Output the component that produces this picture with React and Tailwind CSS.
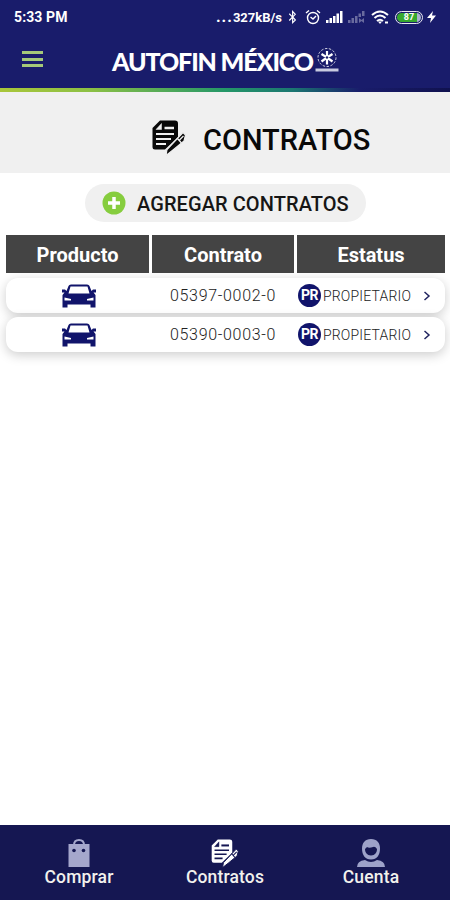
import { FaBluetoothB } from 'react-icons/fa';

const CONTRACTS = [
  { id: '05397-0002-0', badge: 'PR', status: 'PROPIETARIO' },
  { id: '05390-0003-0', badge: 'PR', status: 'PROPIETARIO' },
];

function ContractIcon({ className, lines }) {
  return (
    <svg viewBox="0 0 34 36" className={className} fill="currentColor">
      <path d="M8 0.500H23Q26 0.500 26 3.500V17L13 29.500H3Q0.500 29.500 0.500 27V8Z" />
      <g stroke={lines} fill="none">
        <path d="M4 9.500L9.500 3.500V9.500Z" fill={lines} strokeWidth="0.500" />
        <path d="M12.500 8H22" strokeWidth="2.500" />
        <path d="M4 14H22M4 19H19M4 24H14" strokeWidth="2" />
      </g>
      <path d="M31 12.500L33.500 15L32 21L21 30L14 35.500L15 29.500Z" stroke={lines} strokeWidth="1.200" />
      <path d="M25 18L29.500 23M31.500 16L27.500 20" stroke={lines} strokeWidth="1.300" />
    </svg>
  );
}

function CarIcon() {
  return (
    <svg viewBox="0 0 34 24" className="h-6 w-[34px]" fill="#11146b">
      <path fillRule="evenodd" d="M6.500 2Q7 0.500 9 0.500H25Q27 0.500 27.500 2L29.500 7L31 5.500H34V8.500H31.500L33.500 11V23.500H28.500V20.500H5.500V23.500H0.500V11L2.500 8.500H0V5.500H3L4.500 7ZM8.500 2.500L6.500 9.500H27.500L25.500 2.500ZM2.500 13.500V16.500H9V15ZM31.500 13.500L25 15V16.500H31.500Z" />
    </svg>
  );
}

function StatusBar() {
  return (
    <div className="flex h-[34px] items-center pl-[14px] pr-[14px] text-white">
      <span className="text-[14px] font-bold tracking-[0.100px]">5:33 PM</span>
      <div className="ml-auto flex h-[18px] items-center">
        <span className="mr-[4px] whitespace-nowrap text-[13px] font-bold"><span className="text-[16px] tracking-[1px]">...</span>327kB/s</span>
        <FaBluetoothB className="mr-[6px] h-[14px] w-[13px]" />
        <svg viewBox="0 0 16 16" className="mr-[5px] h-4 w-4" fill="none" stroke="currentColor" strokeWidth="1.400">
          <circle cx="8" cy="9" r="5.500" />
          <path d="M1 4L4 1.500M15 4L12 1.500M5.500 8L8 10L11 7" />
        </svg>
        <svg viewBox="0 0 17 14" className="mr-[5px] h-[14px] w-[17px]" fill="currentColor">
          <path d="M0 10H2.500V13H0ZM3.500 8H6V13H3.500ZM7 6H9.500V13H7ZM10.500 3.500H13V13H10.500ZM14 1H16.500V13H14Z" />
        </svg>
        <svg viewBox="0 0 17 14" className="mr-[6px] h-[14px] w-[17px] opacity-35" fill="currentColor">
          <path d="M0 10H2.500V13H0ZM3.500 8H6V13H3.500ZM7 6H9.500V13H7ZM10.500 3.500H13V7H10.500ZM14 1H16.500V6H14ZM11 8L13.500 10L16 8V13L13.500 11L11 13Z" />
        </svg>
        <svg viewBox="0 0 18 15" className="mr-[6px] h-[15px] w-[18px]" fill="none" stroke="currentColor" strokeWidth="2">
          <path d="M1 5Q9 -2 17 5M3.500 8Q9 3 14.500 8M6 11Q9 8.500 12 11" />
          <path d="M7 11.500L9 14L11 11.500Z" fill="currentColor" stroke="none" />
          <path d="M14 12.500H17" />
        </svg>
        <span className="mr-[4px] flex h-[13px] w-[28px] items-center justify-center rounded-full border-[1.500px] border-white/90 p-[1px]">
          <span className="flex h-full w-full items-center justify-center rounded-full bg-[linear-gradient(90deg,#36a92e_84%,#a9b3cf_84%)] text-[9px] font-bold leading-none">87</span>
        </span>
        <svg viewBox="0 0 9 12" className="h-3 w-[9px]" fill="currentColor"><path d="M6 0L0 7H4L3 12L9 4.500H5Z" /></svg>
      </div>
    </div>
  );
}

function Header() {
  return (
    <header className="flex h-[54px] pl-[22px] text-white">
      <div className="mt-[17px] flex w-[90px] flex-col gap-[3.500px]">
        <div className="h-[3px] w-[21px] bg-[#a5c979]" />
        <div className="h-[3px] w-[21px] bg-[#a5c979]" />
        <div className="h-[3px] w-[21px] bg-[#a5c979]" />
      </div>
      <span className="mt-[12px] w-[203px] whitespace-nowrap font-['Lato','Liberation_Sans',sans-serif] text-[25px] font-black leading-[30px] tracking-[-1.120px]">
        AUTOFIN MÉXICO
      </span>
      <svg viewBox="0 0 24 26" className="mt-[13px] h-[26px] w-6" fill="none" stroke="currentColor">
        <circle cx="12" cy="10.500" r="9" strokeWidth="1" strokeDasharray="2.500 1.500" opacity="0.8" />
        <path d="M12 10.500V4M12 10.500L17.500 7M12 10.500L17.500 14.500M12 10.500V17.500M12 10.500L6.500 14.500M12 10.500L6.500 7" strokeWidth="2.200" />
        <circle cx="12" cy="10.500" r="1.200" fill="#191c6b" stroke="none" />
        <path d="M0.500 23H23.500" strokeWidth="3" stroke="#c8cbe0" />
      </svg>
    </header>
  );
}

function NavItem({ label, children }) {
  return (
    <div className="flex w-[146px] flex-col items-center pt-[14px]">
      <div className="flex h-[28px] items-start justify-center">{children}</div>
      <span className="text-[17.500px] font-medium leading-[20px] tracking-[0.150px] text-[#f2f1ed]">{label}</span>
    </div>
  );
}

export default function App() {
  return (
    <div className="flex h-[900px] w-[450px] flex-col overflow-hidden bg-white font-['Roboto','Liberation_Sans',sans-serif]">
      <div className="bg-[#191c6b]">
        <StatusBar />
        <Header />
      </div>
      <div className="h-1 shrink-0 bg-[linear-gradient(90deg,#a9c63a_0%,#8cc044_20%,#249768_50%,#1b7771_65%,#191c6b_80%,#10124f_100%)]" />

      <div className="flex h-[81px] shrink-0 items-center bg-[#f0f0f0] pl-[152px]">
        <ContractIcon className="mt-[10px] h-[36px] w-[34px] text-[#090909]" lines="#f0f0f0" />
        <h1 className="ml-[17px] mt-[14px] whitespace-nowrap text-[29px] font-medium leading-[34px] text-[#090909]">CONTRATOS</h1>
      </div>

      <button className="ml-[85px] mt-[11px] flex h-[38px] w-[281px] shrink-0 items-center rounded-full bg-[#f0f0f0] pl-[17px]">
        <svg viewBox="0 0 24 24" className="h-6 w-6">
          <circle cx="12" cy="12" r="11.500" fill="#86cd3e" />
          <path d="M12 6V18M6 12H18" stroke="#fff" strokeWidth="3.500" />
        </svg>
        <span className="ml-[11px] mt-[2px] whitespace-nowrap text-[20px] font-medium tracking-[0.080px] text-[#161616]">AGREGAR CONTRATOS</span>
      </button>

      <div className="ml-[6px] mt-[13px] grid h-[38px] w-[439px] shrink-0 grid-cols-[143px_142px_148px] gap-[3px] text-center text-[20px] font-bold leading-[40px] text-white">
        <div className="h-[38px] bg-[#444444]">Producto</div>
        <div className="h-[38px] bg-[#444444]">Contrato</div>
        <div className="h-[38px] bg-[#444444]">Estatus</div>
      </div>

      <div className="ml-[6px] mt-[5px] flex w-[439px] flex-col gap-[4px]">
        {CONTRACTS.map((c) => (
          <div key={c.id} className="flex h-[35px] items-center rounded-[12px] bg-white shadow-[0_3px_12px_rgba(0,0,0,0.2)]">
            <div className="flex w-[145px] justify-center"><CarIcon /></div>
            <div className="mt-[1px] w-[147px] pl-[19px] text-[16px] font-light tracking-[0.680px] text-[#222]">{c.id}</div>
            <span className="flex h-[23px] w-[23px] items-center justify-center rounded-full bg-[#11146b] text-[14px] font-bold tracking-[-0.5px] text-white">{c.badge}</span>
            <span className="ml-[2px] mt-[1px] w-[96px] text-[14px] font-light tracking-[0.180px] text-[#222]">{c.status}</span>
            <svg viewBox="0 0 8 10" className="ml-[4px] h-[10px] w-2" fill="none" stroke="#20235f" strokeWidth="1.500"><path d="M1.500 1L6 5L1.500 9" /></svg>
          </div>
        ))}
      </div>

      <nav className="mt-auto flex h-[75px] shrink-0 justify-between bg-[#151752] px-[6px]">
        <NavItem label="Comprar">
          <svg viewBox="0 0 22 28" className="h-7 w-[22px]" fill="#a5a7cc">
            <path d="M0.500 5H21.500V28H0.500Z" />
            <path d="M6 10V6Q6 1 11 1T16 6V10" fill="none" stroke="#a5a7cc" strokeWidth="2" />
            <path d="M8 5Q11 1.500 14 5Z" fill="#151752" />
            <circle cx="6" cy="11.500" r="1.800" fill="#151752" />
            <circle cx="15.500" cy="11.500" r="1.800" fill="#151752" />
          </svg>
        </NavItem>
        <NavItem label="Contratos">
          <ContractIcon className="h-[29px] w-[28px] text-white" lines="#151752" />
        </NavItem>
        <NavItem label="Cuenta">
          <svg viewBox="0 0 28 28" className="h-7 w-7" fill="#9da2c9">
            <path fillRule="evenodd" d="M14 0C20 0 23 4 23 9.500C23 16 20 20.500 14 20.500S5 16 5 9.500C5 4 8 0 14 0ZM8 10C8 13.500 10 16.500 14 16.500S20 13.500 20 10Q18 7 16 8Q12 9.500 10 8Z" />
            <path d="M0 28Q0 22 8 21Q14 25 20 21Q28 22 28 28Z" />
          </svg>
        </NavItem>
      </nav>
    </div>
  );
}
